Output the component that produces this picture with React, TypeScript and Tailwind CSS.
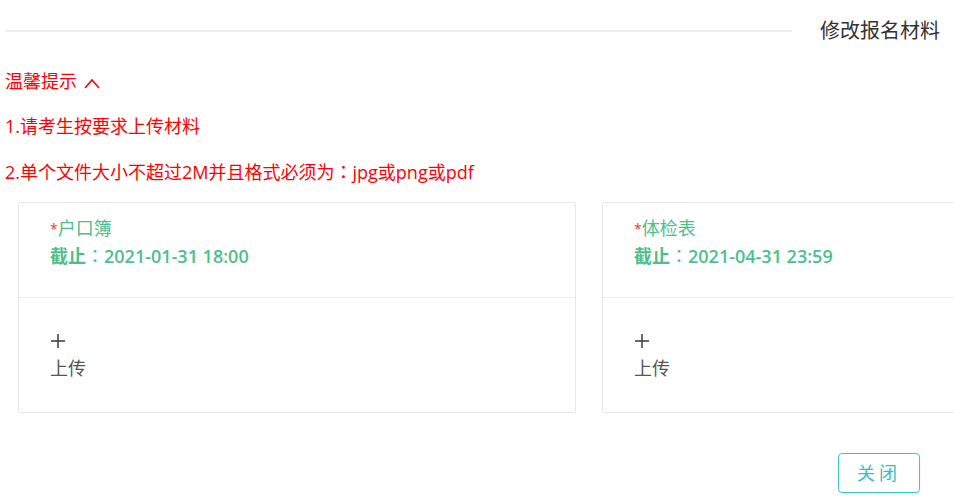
import React from "react";

const font = "font-['Open_Sans','Noto_Sans_CJK_SC',sans-serif]";

function Colon() {
  return <span className="font-['Noto_Sans_CJK_TC',sans-serif] font-normal">：</span>;
}

function Plus() {
  return (
    <svg width="14" height="14" viewBox="0 0 14 14" className="block">
      <line x1="7" y1="0" x2="7" y2="14" stroke="#444" strokeWidth="1.6" />
      <line x1="0" y1="7" x2="14" y2="7" stroke="#444" strokeWidth="1.6" />
    </svg>
  );
}

function Card({ name, deadline }: { name: string; deadline: string }) {
  return (
    <div className="w-[558px] h-[211px] shrink-0 border border-[#e6e6e6] rounded-[3px] bg-white flex flex-col">
      <div className="h-[95px] border-b border-[#ececec] pl-[31px] pt-[12px] text-[18px] leading-[27px] text-[#4dbf8c]">
        <div>
          <span className="text-[#ff3333] text-[14px] align-top">*</span>
          {name}
        </div>
        <div className="font-semibold">
          截止<Colon />
          {deadline}
        </div>
      </div>
      <div className="pl-[32px] pt-[36px]">
        <Plus />
        <div className="text-[18px] leading-[27px] text-[#555] mt-[7px] -ml-[1px]">上传</div>
      </div>
    </div>
  );
}

export default function App() {
  return (
    <div className={`${font} w-[954px] h-[499px] overflow-hidden bg-white`}>
      <div className="flex items-center h-[62px]">
        <div className="flex-1 h-[2px] bg-[#f0f0f0] ml-[5px]" />
        <div className="ml-[28px] mr-[14px] text-[20px] leading-[30px] text-[#333]">修改报名材料</div>
      </div>
      <div className="pl-[5px] text-[18px] leading-[27px] text-[#ff0000]">
        <div className="mt-[6px] flex items-center">
          <span>温馨提示</span>
          <svg width="16" height="11" viewBox="0 0 16 11" className="ml-[7px] mt-[3px]">
            <polyline points="1,10 8,2 15,10" fill="none" stroke="#ff0000" strokeWidth="1.6" />
          </svg>
        </div>
        <div className="mt-[18px]">1.请考生按要求上传材料</div>
        <div className="mt-[18px]">
          2.单个文件大小不超过2M并且格式必须为<Colon />jpg或png或pdf
        </div>
      </div>
      <div className="flex gap-[26px] ml-[18px] mt-[16px]">
        <Card name="户口簿" deadline="2021-01-31 18:00" />
        <Card name="体检表" deadline="2021-04-31 23:59" />
      </div>
      <div className="flex justify-end mt-[40px] mr-[34px]">
        <button className="w-[82px] h-[40px] border border-[#3cc7c9] rounded-[4px] text-[#35c0c4] text-[18px] leading-[38px] tracking-[4px] shadow-[0_1px_2px_rgba(0,0,0,0.08)]">
          关闭
        </button>
      </div>
    </div>
  );
}
